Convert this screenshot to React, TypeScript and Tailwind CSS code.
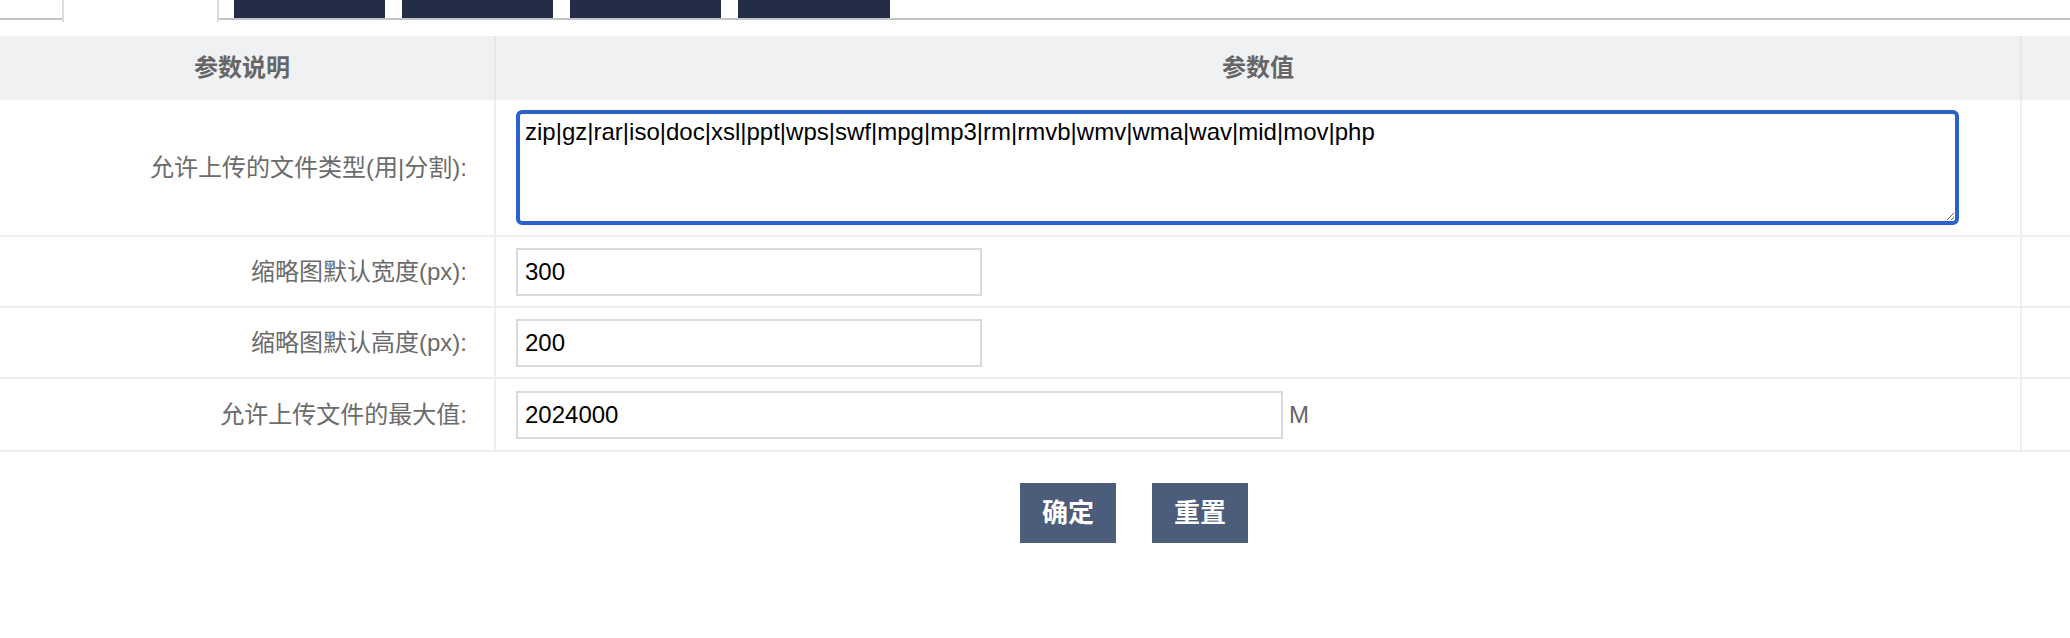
const rows = [
  { label: '缩略图默认宽度(px):', value: '300', width: 'w-[466px]' },
  { label: '缩略图默认高度(px):', value: '200', width: 'w-[466px]' },
]

const App = () => {
  return (
    <div className="w-[2070px] h-[638px] bg-white font-['Liberation_Sans','Noto_Sans_CJK_SC',sans-serif] overflow-hidden">
      {/* tab strip */}
      <div className="flex items-start h-[22px]">
        <div className="w-[62px] h-[20px] border-b-2 border-[#c4c4c4]" />
        <div className="w-[157px] h-[22px] border-x-2 border-[#dcdcdc] bg-white" />
        <div className="flex-1 h-[20px] border-b-2 border-[#c4c4c4] flex gap-[17px] pl-[15px]">
          <div className="w-[151px] h-[18px] bg-[#232d47]" />
          <div className="w-[151px] h-[18px] bg-[#232d47]" />
          <div className="w-[151px] h-[18px] bg-[#232d47]" />
          <div className="w-[152px] h-[18px] bg-[#232d47]" />
        </div>
      </div>

      {/* table */}
      <div className="mt-[14px]">
        <div className="flex h-[64px] bg-[#f0f1f3] text-[24px] font-bold text-[#666]">
          <div className="w-[496px] border-r-2 border-[#e8e8ea] flex items-center justify-center pr-[10px]">参数说明</div>
          <div className="w-[1526px] border-r-2 border-[#e8e8ea] flex items-center justify-center">参数值</div>
          <div className="flex-1" />
        </div>

        <div className="flex h-[137px] border-b-2 border-[#eeeeee]">
          <div className="w-[496px] border-r-2 border-[#eeeeee] flex items-center justify-end pr-[27px] text-[24px] text-[#6b6b6b]">
            允许上传的文件类型(用|分割):
          </div>
          <div className="w-[1526px] border-r-2 border-[#eeeeee] flex items-center pl-[20px]">
            <textarea
              className="w-[1443px] h-[115px] border-[4px] border-[#2b61cc] rounded-[6px] outline-none px-[5px] py-[4px] text-[24px] leading-[28px] text-black font-['Liberation_Sans',sans-serif]"
              defaultValue="zip|gz|rar|iso|doc|xsl|ppt|wps|swf|mpg|mp3|rm|rmvb|wmv|wma|wav|mid|mov|php"
            />
          </div>
          <div className="flex-1" />
        </div>

        {rows.map((r) => (
          <div key={r.label} className="flex h-[71px] border-b-2 border-[#eeeeee]">
            <div className="w-[496px] border-r-2 border-[#eeeeee] flex items-center justify-end pr-[27px] text-[24px] text-[#6b6b6b]">
              {r.label}
            </div>
            <div className="w-[1526px] border-r-2 border-[#eeeeee] flex items-center pl-[20px]">
              <input
                className={`${r.width} h-[48px] border-2 border-[#dadada] outline-none px-[7px] text-[24px] text-black font-['Liberation_Sans',sans-serif]`}
                defaultValue={r.value}
              />
            </div>
            <div className="flex-1" />
          </div>
        ))}

        <div className="flex h-[73px] border-b-2 border-[#eeeeee]">
          <div className="w-[496px] border-r-2 border-[#eeeeee] flex items-center justify-end pr-[27px] text-[24px] text-[#6b6b6b]">
            允许上传文件的最大值:
          </div>
          <div className="w-[1526px] border-r-2 border-[#eeeeee] flex items-center pl-[20px] gap-[6px]">
            <input
              className="w-[767px] h-[48px] border-2 border-[#dadada] outline-none px-[7px] text-[24px] text-black font-['Liberation_Sans',sans-serif]"
              defaultValue="2024000"
            />
            <span className="text-[24px] text-[#666]">M</span>
          </div>
          <div className="flex-1" />
        </div>
      </div>

      {/* buttons */}
      <div className="flex gap-[36px] pl-[1020px] mt-[31px]">
        <button className="w-[96px] h-[60px] bg-[#4c5c7b] text-white text-[26px] font-bold">确定</button>
        <button className="w-[96px] h-[60px] bg-[#4c5c7b] text-white text-[26px] font-bold">重置</button>
      </div>
    </div>
  )
}

export default App
